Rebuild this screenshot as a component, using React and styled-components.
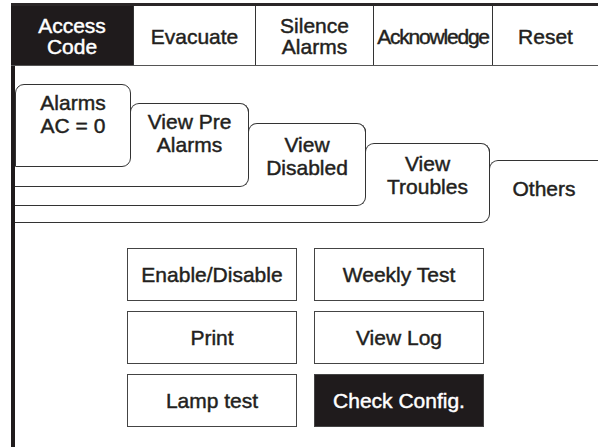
import React from 'react';
import styled, { createGlobalStyle } from 'styled-components';

const GlobalStyle = createGlobalStyle`
  html, body {
    margin: 0;
    padding: 0;
    background: #fff;
  }
  body {
    font-family: "Liberation Sans", Arial, sans-serif;
    color: #231f20;
    -webkit-text-stroke: 0.45px currentColor;
  }
  * {
    box-sizing: border-box;
  }
`;

const INK = '#231f20';
const LINE = '#333';

const Panel = styled.div`
  display: flex;
  flex-direction: column;
  height: calc(100vh - 3px);
  margin: 3px 0 0 11px;
  overflow: hidden;
`;

// top command bar
const HeaderBar = styled.div`
  display: flex;
  flex-shrink: 0;
  height: 63px;
  border-top: 3px solid #2a2627;
  border-bottom: 1px solid #555;
`;

const HeaderCell = styled.div`
  display: flex;
  align-items: center;
  justify-content: center;
  flex: ${({ $w }) => ($w ? `0 0 ${$w}px` : '1')};
  border-right: ${({ $last }) => ($last ? 'none' : `1px solid ${LINE}`)};
  background: ${({ $active }) => ($active ? '#1f1b1c' : '#fff')};
  color: ${({ $active }) => ($active ? '#fff' : INK)};
  font-size: 21px;
  line-height: 21px;
  padding-top: 1px;
  text-align: center;
  letter-spacing: ${({ $tight }) => ($tight ? '-1.2px' : 'normal')};
`;

const Body = styled.div`
  flex: 1;
  border-left: 4px solid #1f1b1c;
  padding-top: 94px;
`;

// stacked folder tabs
const TabRow = styled.div`
  display: flex;
  align-items: flex-start;
`;

const FirstTab = styled.div`
  flex-shrink: 0;
  width: 116px;
  height: 83px;
  margin-top: -${({ $lift }) => $lift}px;
  border: 1px solid ${LINE};
  border-radius: 9px 9px 9px 0;
  padding-top: 6px;
  font-size: 21px;
  line-height: 23px;
  text-align: center;
`;

const TabLayer = styled.div`
  display: flex;
  align-items: flex-start;
  flex-shrink: 0;
  width: ${({ $w }) => $w}px;
  height: ${({ $h }) => $h}px;
  margin-top: -${({ $lift }) => $lift}px;
  border-right: 1px solid ${LINE};
  border-bottom: 1px solid ${LINE};
  border-radius: 0 9px 9px 0;
`;

const TabHead = styled.div`
  flex-shrink: 0;
  width: ${({ $w }) => $w}px;
  height: 40px;
  margin: 0 -1px;
  border: 1px solid ${LINE};
  border-bottom: none;
  border-radius: 9px 9px 0 0;
  padding-top: ${({ $pad }) => $pad}px;
  font-size: 21px;
  line-height: 23px;
  text-align: center;
`;

const OpenTab = styled.div`
  flex: 1;
  height: 50px;
  margin-left: -1px;
  border-top: 1px solid ${LINE};
  border-left: 1px solid ${LINE};
  border-top-left-radius: 9px;
  padding-top: 16px;
  font-size: 21px;
  line-height: 23px;
  text-align: center;
`;

const Line = styled.div`
  white-space: nowrap;
`;

// action buttons
const ActionGrid = styled.div`
  display: grid;
  grid-template-columns: repeat(2, 170px);
  grid-auto-rows: 53px;
  gap: 10px 17px;
  margin: 25px 0 0 112px;
`;

const ActionButton = styled.button`
  padding: 0;
  border: 1px solid #444;
  background: ${({ $active }) => ($active ? '#1f1b1c' : '#fff')};
  color: ${({ $active }) => ($active ? '#fff' : INK)};
  font-family: "Liberation Sans", Arial, sans-serif;
  font-size: 21px;
  -webkit-text-stroke: 0.45px currentColor;
  cursor: pointer;
`;

const header = [
  { text: ['Access', 'Code'], w: 123, active: true },
  { text: ['Evacuate'], w: 122 },
  { text: ['Silence', 'Alarms'], w: 118 },
  { text: ['Acknowledge'], w: 119, tight: true },
  { text: ['Reset'] },
];

// right edge / top / bottom of each tab, in page pixels
const tabs = [
  { label: ['Alarms', 'AC = 0'], right: 130, top: 84, bottom: 166, pad: 6 },
  { label: ['View Pre', 'Alarms'], right: 248, top: 103, bottom: 186, pad: 6 },
  { label: ['View', 'Disabled'], right: 365, top: 123, bottom: 205, pad: 9 },
  { label: ['View', 'Troubles'], right: 489, top: 143, bottom: 222, pad: 8 },
];
const OPEN_TAB_TOP = 160;

const actions = [
  'Enable/Disable',
  'Weekly Test',
  'Print',
  'View Log',
  'Lamp test',
  'Check Config.',
];

const Lines = ({ items }) => items.map((t) => <Line key={t}>{t}</Line>);

// each tab wraps the ones in front of it
const buildTabs = (index, nextTop) => {
  const tab = tabs[index];
  const lift = nextTop - tab.top;
  if (index === 0) {
    return (
      <FirstTab $lift={lift}>
        <Lines items={tab.label} />
      </FirstTab>
    );
  }
  const prev = tabs[index - 1];
  return (
    <TabLayer $w={tab.right - 14} $h={tab.bottom - tab.top + 1} $lift={lift}>
      {buildTabs(index - 1, tab.top)}
      <TabHead $w={tab.right - prev.right + 1} $pad={tab.pad}>
        <Lines items={tab.label} />
      </TabHead>
    </TabLayer>
  );
};

const App = () => {
  return (
    <>
      <GlobalStyle />
      <Panel>
        <HeaderBar>
          {header.map((h, i) => (
            <HeaderCell
              key={h.text.join(' ')}
              $w={h.w}
              $active={h.active}
              $tight={h.tight}
              $last={i === header.length - 1}
            >
              <div>
                <Lines items={h.text} />
              </div>
            </HeaderCell>
          ))}
        </HeaderBar>
        <Body>
          <TabRow>
            {buildTabs(tabs.length - 1, OPEN_TAB_TOP)}
            <OpenTab>Others</OpenTab>
          </TabRow>
          <ActionGrid>
            {actions.map((a) => (
              <ActionButton key={a} $active={a === 'Check Config.'}>
                {a}
              </ActionButton>
            ))}
          </ActionGrid>
        </Body>
      </Panel>
    </>
  );
};

export default App;
